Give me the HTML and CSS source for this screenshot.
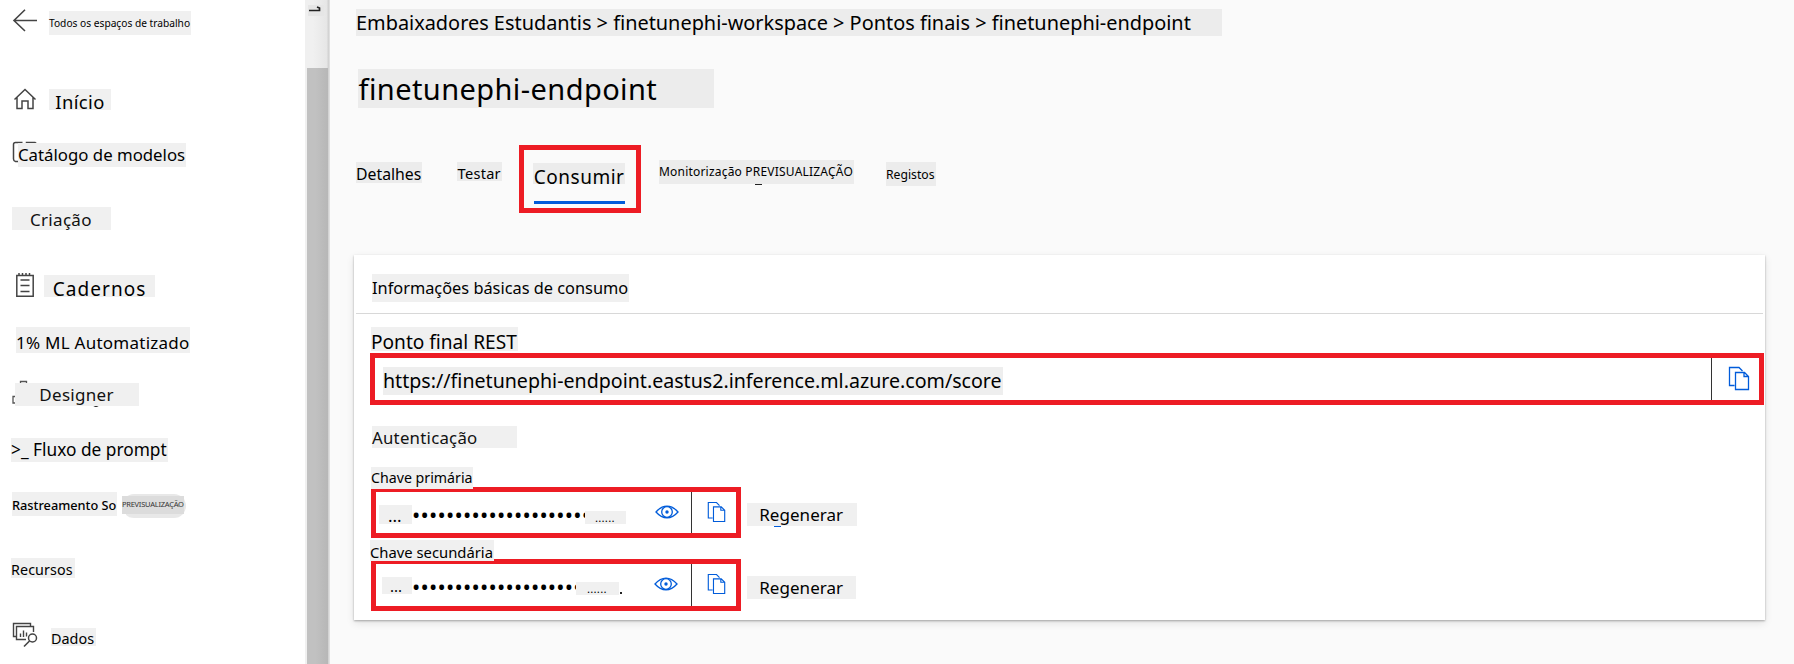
FILE: index.html
```
<!DOCTYPE html>
<html lang="pt">
<head>
<meta charset="utf-8">
<title>finetunephi-endpoint</title>
<link rel="stylesheet" href="styles.css">
</head>
<body>
<svg class="defs" width="0" height="0">
  <symbol id="copy" viewBox="0 0 22 25">
    <path d="M6.5 19.5H1.5V1.5H11L14.5 5M7.500 6.500H16.500L20.500 10.500V23.500H7.500ZM16 6.500V10.500H20.500" fill="none" stroke="#015cda" stroke-width="1.300"/>
  </symbol>
  <symbol id="eye" viewBox="0 0 24 14">
    <path d="M1 7C4.500 3 8 1.200 12 1.200S19.500 3 23 7C19.500 11 16 12.800 12 12.800S4.500 11 1 7Z" fill="none" stroke="#015cda" stroke-width="1.300"/>
    <circle cx="12" cy="7" r="5.300" fill="none" stroke="#015cda" stroke-width="1.300"/>
    <circle cx="12" cy="7" r="1.700" fill="#015cda"/>
  </symbol>
</svg>
<div class="app">
  <aside class="sidebar">
    <nav class="nav">
      <a class="row row-back">
        <svg class="icon" width="26" height="24"><path d="M25 11.500H2M13 .800L2 11.500L13 22" fill="none" stroke="#444" stroke-width="1.600"/></svg>
        <span class="label l-back">Todos os espaços de trabalho</span>
      </a>
      <a class="row row-home">
        <svg class="icon" width="24" height="22"><path d="M1.500 11.500L12 1.500L22.500 11.500M4 9.500V20.500H9V13H15V20.500H20V9.500" fill="none" stroke="#444" stroke-width="1.500"/></svg>
        <span class="label l-home">Início</span>
      </a>
      <a class="row row-catalog">
        <svg class="icon" width="26" height="24"><path d="M10.500 1.500H3.500Q1.500 1.500 1.500 3.500V18Q1.500 20 3.500 20.500H6M14.500 2.500V1.500H23L25 3" fill="none" stroke="#444" stroke-width="1.500"/></svg>
        <span class="label l-catalog">Catálogo de modelos</span>
      </a>
      <div class="row row-authoring"><span class="label l-authoring">Criação</span></div>
      <a class="row row-notebooks">
        <svg class="icon" width="20" height="26"><path d="M1.800 3.500H18.200V24.200H1.800ZM5.500 8H14.500M5.500 13.500H14.500M5.500 19.500H14.500M4 1V3M7.500 1V3M11 1V3M14.500 1V3" fill="none" stroke="#444" stroke-width="1.500"/></svg>
        <span class="label l-notebooks">Cadernos</span>
      </a>
      <a class="row row-automl"><span class="label l-automl">1% ML Automatizado</span></a>
      <a class="row row-designer">
        <svg class="icon" width="88" height="28"><path d="M8.500 4V1.500H14.500V4M3 16.500H1V23H3" fill="none" stroke="#555" stroke-width="1.300"/><path d="M81 25Q84 27.500 87 25" fill="none" stroke="#111" stroke-width="1.500"/></svg>
        <span class="label l-designer">Designer</span>
      </a>
      <a class="row row-flow"><span class="label l-flow">&gt;_ Fluxo de prompt</span></a>
      <a class="row row-tracing">
        <span class="label l-tracing">Rastreamento So</span>
        <span class="pill"><span class="label l-preview">PREVISUALIZAÇÃO</span></span>
      </a>
      <div class="row row-assets"><span class="label l-assets">Recursos</span></div>
      <a class="row row-data">
        <svg class="icon" width="26" height="26"><path d="M4 14.500H1.500V1.500H18.500V4M14 17.500H4.500V4.500H21.500V10M8.500 15V11.500M11.500 15V8.500M14.500 14.500V10.500" fill="none" stroke="#444" stroke-width="1.400"/><circle cx="20.500" cy="16" r="4" fill="#fff" stroke="#444" stroke-width="1.500"/><path d="M17.500 19L12 24.500" stroke="#444" stroke-width="1.600"/></svg>
        <span class="label l-data">Dados</span>
      </a>
    </nav>
    <div class="scroll">
      <svg class="collapse" width="16" height="11"><path d="M1 5.500H11.500V3L9 2" fill="none" stroke="#222" stroke-width="1.700"/></svg>
      <div class="thumb"></div>
    </div>
  </aside>
  <main class="main">
    <div class="label l-crumbs">Embaixadores Estudantis &gt; finetunephi-workspace &gt; Pontos finais &gt; finetunephi-endpoint</div>
    <h1 class="label l-title">finetunephi-endpoint</h1>
    <div class="tabs">
      <a class="label l-details">Detalhes</a>
      <a class="label l-test">Testar</a>
      <a class="tab-active"><span class="label l-consume">Consumir</span></a>
      <a class="label l-monitor">Monitorização PREVISUALIZAÇÃO</a>
      <a class="label l-logs">Registos</a>
    </div>
    <section class="card">
      <header class="card-head"><h2 class="label l-info">Informações básicas de consumo</h2></header>
      <div class="card-body">
        <div class="label l-rest">Ponto final REST</div>
        <div class="field field-url">
          <span class="label l-url">https://finetunephi-endpoint.eastus2.inference.ml.azure.com/score</span>
          <button class="copy copy-lg"><svg width="22" height="25"><use href="#copy"/></svg></button>
        </div>
        <div class="label l-auth">Autenticação</div>
        <div class="label l-key1">Chave primária</div>
        <div class="line">
          <div class="field field-key1">
            <span class="label l-lead1">...</span>
            <span class="dots dots1">•••••••••••••••••••••</span>
            <span class="label l-tail1">......</span>
            <svg class="eye" width="24" height="14"><use href="#eye"/></svg>
            <button class="copy"><svg width="19" height="22"><use href="#copy"/></svg></button>
          </div>
          <button class="label l-regen1">Regenerar</button>
        </div>
        <div class="label l-key2">Chave secundária</div>
        <div class="line">
          <div class="field field-key2">
            <span class="label l-lead2">...</span>
            <span class="dots dots2">••••••••••••••••••••</span>
            <span class="label l-tail2">......</span>
            <span class="speck"></span>
            <svg class="eye" width="24" height="14"><use href="#eye"/></svg>
            <button class="copy"><svg width="19" height="22"><use href="#copy"/></svg></button>
          </div>
          <button class="label l-regen2">Regenerar</button>
        </div>
      </div>
    </section>
  </main>
</div>
</body>
</html>
```
FILE: styles.css
```
* { box-sizing: border-box; }
body { margin: 0; background: #fafafa; color: #000; font-family: "Noto Sans", sans-serif; overflow: hidden; }
h1, h2 { margin: 0; }
button { border: 0; padding: 0; background: none; font-family: inherit; color: inherit; text-align: left; }
.defs { display: block; height: 0; }
.app { display: flex; height: 664px; }

.label { display: block; flex: none; background: #f0f0f0; font-weight: 400; white-space: pre; z-index: 1; position: relative; }

/* Sidebar */
.sidebar { display: flex; flex: none; width: 330px; background: #fff; }
.nav { width: 305px; display: flex; flex-direction: column; align-items: flex-start; }
.row { display: flex; align-items: flex-start; flex: none; }
.icon { display: block; flex: none; }
.row-back { margin: 9px 0 0 12px; height: 26px; }
.l-back { margin: 2px 0 0 11px; width: 142px; height: 24px; font-size: 10.2px; line-height: 24px; }
.row-home { margin: 52px 0 0 13px; height: 23px; }
.row-home .icon { margin-top: 1px; }
.l-home { margin: 2px 0 0 12px; width: 62px; height: 21px; padding-left: 6.3px; font-size: 18.4px; line-height: 25.6px; letter-spacing: .4px; }
.row-catalog { margin: 31px 0 0 12px; height: 26px; }
.l-catalog { margin: 2px 0 0 -20px; width: 168px; height: 24px; font-size: 16.8px; line-height: 23.6px; }
.row-authoring { margin: 40px 0 0 12px; height: 23px; }
.l-authoring { width: 99px; height: 23px; padding-left: 18px; font-size: 17px; line-height: 25px; letter-spacing: .3px; color: #111; }
.row-notebooks { margin: 42px 0 0 15px; height: 26px; }
.l-notebooks { margin: 3px 0 0 9px; width: 111px; height: 22px; padding-left: 8.8px; font-size: 19px; line-height: 29px; letter-spacing: 1.05px; }
.row-automl { margin: 29px 0 0 16px; height: 26px; }
.l-automl { width: 174px; height: 26px; font-size: 17px; line-height: 32.4px; letter-spacing: .25px; }
.row-designer { margin: 27px 0 0 12px; height: 28px; }
.l-designer { margin: 3px 0 0 -85px; width: 124px; height: 23px; padding-left: 24.3px; font-size: 17px; line-height: 24.8px; letter-spacing: .3px; color: #111; }
.row-flow { margin: 30px 0 0 11px; height: 24px; }
.l-flow { width: 157px; height: 24px; font-size: 17.3px; line-height: 23px; }
.row-tracing { margin: 30px 0 0 12px; height: 26px; }
.l-tracing { width: 105px; height: 24px; font-size: 12.75px; line-height: 26px; font-weight: 500; }
.pill { margin: 2px 0 0 5px; width: 64px; height: 24px; padding-top: 2px; background: linear-gradient(#e8e8e8, #e8e8e8) 4px 0 / 60px 24px no-repeat; border-radius: 12px; }
.l-preview { width: 62px; height: 18px; background: #dcdcdc; font-size: 7.5px; line-height: 17px; letter-spacing: -.25px; color: #333; }
.row-assets { margin: 40px 0 0 11px; height: 20px; }
.l-assets { width: 64px; height: 20px; font-size: 14.3px; line-height: 23.5px; letter-spacing: .1px; }
.row-data { margin: 44px 0 0 12px; height: 26px; }
.l-data { margin: 6px 0 0 13px; width: 45px; height: 18px; font-size: 14.4px; line-height: 22.4px; }

.scroll { width: 25px; padding: 5px 2px 0; background: linear-gradient(90deg, #f0f0f0 0 8px, #e6e6e6 22px, #d3d3d3 23px 24px, #e0e0e0 24px); }
.collapse { display: block; margin: 0 0 52px 1px; background: #e6e6e6; }
.thumb { height: 596px; background: linear-gradient(90deg, #c1c1c1 40%, #b7b7b7); }

/* Page header */
.main { flex: 1; min-width: 0; padding: 9px 29px 0 24px; }
.main > .label, .tabs .label { background: #ececec; }
.l-crumbs { margin-left: 2px; width: 866px; height: 27px; font-size: 19.9px; line-height: 28.4px; }
.main > .l-title { margin: 33px 0 0 4px; width: 356px; height: 39px; padding-left: .5px; font-size: 29px; line-height: 40px; letter-spacing: .42px; }
.tabs { display: flex; align-items: flex-start; margin: 37px 0 0 2px; height: 68px; }
.l-details { margin-top: 17px; width: 66px; height: 21px; font-size: 15.8px; line-height: 25.2px; }
.l-test { margin: 17px 0 0 35px; width: 45px; height: 19px; padding-left: .6px; font-size: 14.6px; line-height: 22.6px; letter-spacing: .25px; }
.tab-active { margin-left: 17px; width: 122px; height: 68px; padding: 13px 10px 0 9px; border: 5px solid #ed1c24; }
.tab-active::after { content: ""; display: block; margin: 17px 1px 0; height: 3px; background: #015cda; }
.l-consume { width: 92px; height: 21px; padding-left: .8px; font-size: 19px; line-height: 28.6px; letter-spacing: .5px; }
.l-monitor { margin: 15px 0 0 18px; width: 195px; height: 24px; font-size: 12px; line-height: 23px; letter-spacing: .2px; }
.l-monitor::after { content: ""; display: block; margin: 1px 0 0 96px; width: 7px; height: 1px; background: #222; }
.l-logs { margin: 17px 0 0 32px; width: 50px; height: 24px; font-size: 12.2px; line-height: 25.8px; }

/* Consumption card */
.card { margin-top: 42px; height: 365px; background: #fff; box-shadow: 0 1px 2px rgba(0,0,0,.3), 0 3px 8px rgba(0,0,0,.1); }
.card-head { margin: 0 2px; height: 59px; padding: 19px 0 0 16px; border-bottom: 1px solid #d8d8d8; }
.l-info { width: 257px; height: 28px; font-size: 16.35px; line-height: 28px; }
.card-body { padding: 13px 1px 0 16px; }
.l-rest { margin-left: 1px; width: 147px; height: 24px; font-size: 19.1px; line-height: 30.8px; }
.field { display: flex; align-items: flex-start; flex: none; border: 5px solid #ed1c24; background: #fff; }
.field-url { margin-top: 2px; height: 52px; }
.l-url { margin: 9px 0 0 8px; width: 620px; height: 28px; background: #eee; font-size: 19.63px; line-height: 28.6px; }
.copy { display: flex; align-items: flex-start; flex: none; margin-left: auto; height: 100%; width: 45px; padding: 9px 0 0 15px; border-left: 1px solid #333; }
.copy svg, .eye { display: block; flex: none; }
.copy-lg { width: 48px; padding: 8px 0 0 16px; }
.l-auth { margin: 21px 0 0 2px; width: 145px; height: 22px; font-size: 16.8px; line-height: 23px; letter-spacing: .25px; color: #111; }
.l-key1 { margin: 19px 0 0 1px; width: 102px; height: 22px; font-size: 14.2px; line-height: 21.4px; }
.line { display: flex; align-items: flex-start; }
.field-key1, .field-key2 { margin-left: 1px; width: 370px; }
.field-key1 { margin-top: -2px; height: 51px; }
.field-key2 { margin-top: -2px; height: 52px; }
.l-lead1 { margin: 13px 0 0 3px; width: 33px; height: 19px; padding-left: 9px; font-size: 17px; line-height: 22.6px; }
.l-lead2 { margin: 13px 0 0 6px; width: 30px; height: 17px; padding-left: 8px; font-size: 15px; line-height: 19.6px; }
.dots { flex: none; height: 26px; white-space: pre; font-size: 22px; line-height: 26px; letter-spacing: .22px; }
.dots1 { margin: 9px 0 0 0; width: 174px; }
.dots2 { margin: 9px 0 0 0; width: 165px; }
.l-tail1 { margin: 19px 0 0 -1px; width: 41px; height: 13px; padding-left: 10px; font-size: 11.5px; line-height: 14px; letter-spacing: .2px; }
.l-tail2 { margin: 18px 0 0 -1px; width: 43px; height: 13px; padding-left: 11px; font-size: 11.5px; line-height: 14px; letter-spacing: .2px; }
.speck { margin: 28px 0 0 1px; width: 2px; height: 2px; background: #222; }
.field-key1 .eye { margin: 13px 0 0 29px; }
.field-key2 .eye { margin: 13px 0 0 32px; }
.l-regen1 { margin: 14px 0 0 6px; width: 110px; height: 23px; padding-left: 12.2px; font-size: 17px; line-height: 24.6px; letter-spacing: .05px; }
.l-regen1::after { content: ""; display: block; margin: -2px 0 0 15px; width: 7px; height: 1px; background: #015cda; }
.l-regen2 { margin: 15px 0 0 6px; width: 109px; height: 23px; padding-left: 12.2px; font-size: 17px; line-height: 24px; letter-spacing: .05px; }
.l-key2 { margin: 2px 0 0 0; width: 124px; height: 21px; font-size: 14.8px; line-height: 24.4px; }
```
